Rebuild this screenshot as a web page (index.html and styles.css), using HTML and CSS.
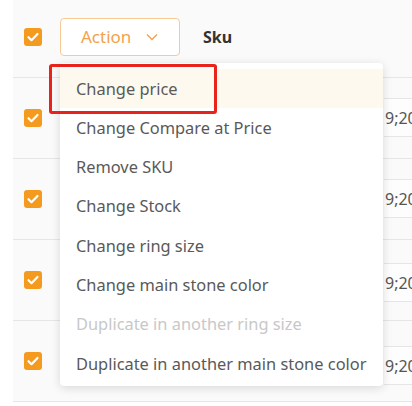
FILE: index.html
```html
<!DOCTYPE html>
<html>
<head>
<meta charset="utf-8">
<link rel="stylesheet" href="styles.css">
</head>
<body>
<div class="page">
  <div class="table">
    <div class="head">
      <div class="cb-cell"><span class="cb"><svg viewBox="0 0 18 18" width="18" height="18"><path d="M4.5 9.2l3 3 6-6.2" fill="none" stroke="#fff" stroke-width="2.2" stroke-linecap="round" stroke-linejoin="round"/></svg></span></div>
      <div class="action-wrap">
        <button class="action">Action <svg class="chev" viewBox="0 0 12 8" width="12" height="8"><path d="M1 1.5l5 5 5-5" fill="none" stroke="#f2a24d" stroke-width="1.3"/></svg></button>
        <div class="menu">
          <div class="item active">Change price</div>
          <div class="item">Change Compare at Price</div>
          <div class="item">Remove SKU</div>
          <div class="item">Change Stock</div>
          <div class="item">Change ring size</div>
          <div class="item">Change main stone color</div>
          <div class="item disabled">Duplicate in another ring size</div>
          <div class="item">Duplicate in another main stone color</div>
          <div class="highlight"></div>
        </div>
      </div>
      <div class="sku">Sku</div>
    </div>
    <div class="row">
      <div class="cb-cell"><span class="cb"><svg viewBox="0 0 18 18" width="18" height="18"><path d="M4.5 9.2l3 3 6-6.2" fill="none" stroke="#fff" stroke-width="2.2" stroke-linecap="round" stroke-linejoin="round"/></svg></span></div>
      <div class="side"><div class="sub s1"></div><div class="sub s2">9;20</div><div class="sub s3"></div></div>
    </div>
    <div class="row">
      <div class="cb-cell"><span class="cb"><svg viewBox="0 0 18 18" width="18" height="18"><path d="M4.5 9.2l3 3 6-6.2" fill="none" stroke="#fff" stroke-width="2.2" stroke-linecap="round" stroke-linejoin="round"/></svg></span></div>
      <div class="side"><div class="sub s1"></div><div class="sub s2">9;20</div><div class="sub s3"></div></div>
    </div>
    <div class="row">
      <div class="cb-cell"><span class="cb"><svg viewBox="0 0 18 18" width="18" height="18"><path d="M4.5 9.2l3 3 6-6.2" fill="none" stroke="#fff" stroke-width="2.2" stroke-linecap="round" stroke-linejoin="round"/></svg></span></div>
      <div class="side"><div class="sub s1 t3"></div><div class="sub s2">9;20</div><div class="sub s3"></div></div>
    </div>
    <div class="row">
      <div class="cb-cell"><span class="cb"><svg viewBox="0 0 18 18" width="18" height="18"><path d="M4.5 9.2l3 3 6-6.2" fill="none" stroke="#fff" stroke-width="2.2" stroke-linecap="round" stroke-linejoin="round"/></svg></span></div>
      <div class="side"><div class="sub s1 t4"></div><div class="sub s2">9;20</div><div class="sub s3"></div></div>
    </div>
  </div>
</div>
</body>
</html>
```
FILE: styles.css
```css
html, body {
  margin: 0;
  padding: 0;
  background: #fff;
  overflow: hidden;
  width: 412px;
  height: 406px;
  font-family: "Noto Sans", "Open Sans", sans-serif;
}
.page {
  padding-left: 13px;
}
.table {
  background: #fafafa;
  width: 420px;
}
.head {
  height: 73px;
  padding-bottom: 4px;
  border-bottom: 1px solid #e6e6e6;
  display: flex;
  align-items: center;
}
.cb-cell {
  width: 47px;
  padding-left: 11px;
  box-sizing: border-box;
  display: flex;
  align-items: center;
}
.cb {
  width: 18px;
  height: 18px;
  border-radius: 3px;
  background: #f49a1f;
  display: block;
}
.cb svg { display: block; }
.action-wrap {
  position: relative;
  width: 143px;
}
.action {
  width: 120px;
  height: 38px;
  box-sizing: border-box;
  border: 1px solid #f6c995;
  border-radius: 4px;
  background: #fff;
  color: #f2a24d;
  font-family: inherit;
  font-size: 17px;
  padding: 0 0 0 20px;
  display: flex;
  align-items: center;
  cursor: pointer;
}
.chev {
  margin-left: 15px;
  margin-top: 1px;
}
.sku {
  font-weight: 700;
  font-size: 16px;
  color: #333;
}
.menu {
  position: absolute;
  left: 0;
  top: 45px;
  width: 323px;
  background: #fff;
  border-radius: 4px;
  box-shadow: 0 2px 10px rgba(0, 0, 0, 0.14);
  padding: 6px 0 3px;
  z-index: 5;
}
.item {
  height: 39.3px;
  line-height: 39.3px;
  padding-left: 16px;
  font-size: 16.4px;
  color: #595959;
  white-space: nowrap;
}
.item.active {
  background: #fdf9ee;
}
.item.disabled {
  color: #c8c8c8;
}
.highlight {
  position: absolute;
  left: -11px;
  top: 1px;
  width: 162px;
  height: 44px;
  border: 3px solid #e8231b;
  border-radius: 3px;
}
.row {
  height: 80px;
  border-bottom: 1px solid #e6e6e6;
  display: flex;
  align-items: center;
}
.side {
  margin-left: auto;
  width: 49px;
  align-self: stretch;
  display: flex;
  flex-direction: column;
}
.sub {
  border-bottom: 1px solid #e6e6e6;
  font-size: 16px;
  color: #555;
  padding-left: 1px;
  display: flex;
  align-items: center;
  white-space: nowrap;
}
.sub.s1 { height: 20px; }
.sub.s1.t3 { height: 23px; }
.sub.s1.t4 { height: 25px; }
.sub.s2 { height: 37px; background: #fdfdfd; }
.sub.s3 { flex: 1; border-bottom: none; }
```
